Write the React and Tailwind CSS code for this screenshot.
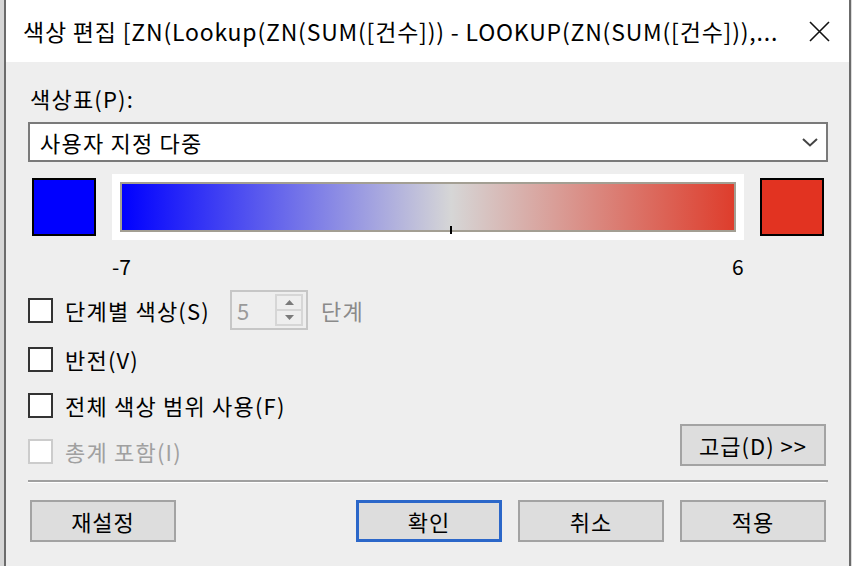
const Checkbox = ({ disabled }) => (
  <span
    className={`w-[25px] h-[25px] border-2 bg-white shrink-0 ${disabled ? 'border-[#cccccc]' : 'border-[#333333]'}`}
  />
)

const Button = ({ children, primary, className = '' }) => (
  <div
    className={`w-[146px] h-[42px] bg-[#dddddd] flex items-center justify-center text-[22px] tracking-[1px] text-black ${
      primary ? 'border-[3px] border-[#2b67c9]' : 'border-2 border-[#a3a3a3]'
    } ${className}`}
  >
    {children}
  </div>
)

export default function App() {
  return (
    <div
      className="w-[852px] h-[566px] flex bg-[#dcdcdc] overflow-hidden text-black"
      style={{ fontFamily: '"Noto Sans CJK KR", "Noto Sans", sans-serif' }}
    >
      <div className="w-[4px] shrink-0 bg-[#d6d6d6]" />
      <div className="w-[847px] shrink-0 flex flex-col border-l-2 border-r-2 border-[#6b6b6b]">
        {/* Title bar */}
        <div className="h-[62px] bg-white flex items-center pl-[17px] pr-[19px]">
          <span className="text-[23px] whitespace-nowrap tracking-[0.8px]">
            색상 편집 [ZN(Lookup(ZN(SUM([건수])) - LOOKUP(ZN(SUM([건수])),...
          </span>
          <svg className="ml-auto w-[21px] h-[21px]" viewBox="0 0 21 21" fill="none" stroke="#111" strokeWidth="1.6">
            <path d="M1 1L20 20M20 1L1 20" />
          </svg>
        </div>

        {/* Body */}
        <div className="flex-1 bg-[#eeeeee] pl-[22px] pr-[21px] flex flex-col text-[22px] tracking-[1.2px]">
          <div className="mt-[22px] h-[28px] leading-[28px] pl-[2px]">색상표(P):</div>

          <div className="mt-[10px] h-[40px] border-2 border-[#7a7a7a] bg-white flex items-center pl-[10px] pr-[8px]">
            <span>사용자 지정 다중</span>
            <svg className="ml-auto w-[16px] h-[10px]" viewBox="0 0 16 10" fill="none" stroke="#444" strokeWidth="2">
              <polyline points="1,2 8,8.5 15,2" />
            </svg>
          </div>

          {/* Colour ramp */}
          <div className="mt-[12px] h-[66px] flex items-center">
            <div className="ml-[4px] w-[64px] h-[58px] border-2 border-black bg-[#0000ff]" />
            <div className="relative ml-[16px] w-[632px] h-[66px] bg-white p-[8px]">
              <div className="w-full h-full border-2 border-[#a39f93] bg-[linear-gradient(to_right,#0000ff_0%,#d6d6d6_53.8%,#de3d2c_100%)]" />
              <div className="absolute left-[338px] top-[52px] w-[2px] h-[8px] bg-black" />
            </div>
            <div className="ml-[16px] w-[64px] h-[58px] border-2 border-black bg-[#e23321]" />
          </div>

          <div className="mt-[12px] h-[28px] leading-[28px] text-[21px] tracking-normal flex">
            <span className="ml-[84px] w-[620px]">-7</span>
            <span>6</span>
          </div>

          {/* Options */}
          <div className="flex">
            <div className="flex flex-col">
              <div className="mt-[10px] h-[40px] flex items-center">
                <Checkbox />
                <span className="ml-[12px] w-[165px] whitespace-nowrap">단계별 색상(S)</span>
                <div className="w-[78px] h-[40px] border-2 border-[#c6c6c6] flex">
                  <span className="pl-[5px] leading-[36px] text-[#9a9a9a]">5</span>
                  <div className="ml-auto mr-[3px] my-[2px] w-[28px] border-2 border-[#d6d6d6] flex flex-col">
                    <div className="flex-1 border-b border-[#d6d6d6] flex items-center justify-center">
                      <svg width="9" height="5" viewBox="0 0 9 5"><polygon points="0,5 9,5 4.5,0" fill="#7a7a7a" /></svg>
                    </div>
                    <div className="flex-1 border-t border-[#d6d6d6] flex items-center justify-center">
                      <svg width="9" height="5" viewBox="0 0 9 5"><polygon points="0,0 9,0 4.5,5" fill="#7a7a7a" /></svg>
                    </div>
                  </div>
                </div>
                <span className="ml-[13px] text-[#8a8a8a]">단계</span>
              </div>
              <div className="mt-[9px] h-[40px] flex items-center">
                <Checkbox />
                <span className="ml-[12px]">반전(V)</span>
              </div>
              <div className="mt-[6px] h-[40px] flex items-center">
                <Checkbox />
                <span className="ml-[12px]">전체 색상 범위 사용(F)</span>
              </div>
              <div className="mt-[6px] h-[40px] flex items-center">
                <Checkbox disabled />
                <span className="ml-[12px] text-[#a0a0a0]">총계 포함(I)</span>
              </div>
            </div>
            <Button className="ml-auto mr-[2px] self-end mb-[5px]">고급(D) &gt;&gt;</Button>
          </div>

          <div className="mt-[9px] h-[2px] bg-[#a0a0a0]" />
          <div className="h-px bg-white mr-[2px]" />

          <div className="mt-[17px] flex">
            <Button className="ml-[2px]">재설정</Button>
            <div className="ml-auto mr-[2px] flex gap-[16px]">
              <Button primary>확인</Button>
              <Button>취소</Button>
              <Button>적용</Button>
            </div>
          </div>
        </div>
      </div>
    </div>
  )
}
